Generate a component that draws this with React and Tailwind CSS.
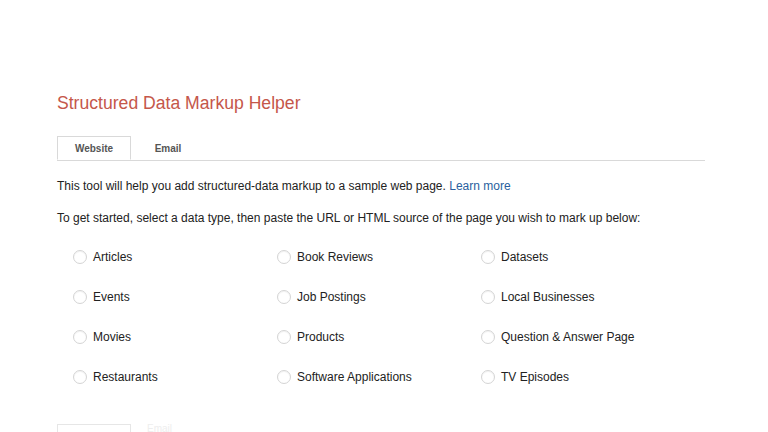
const TYPES = [
  ['Articles', 'Book Reviews', 'Datasets'],
  ['Events', 'Job Postings', 'Local Businesses'],
  ['Movies', 'Products', 'Question & Answer Page'],
  ['Restaurants', 'Software Applications', 'TV Episodes'],
]

function Radio({ label }) {
  return (
    <label className="flex items-center w-[204px] h-[40px]">
      <span className="ml-[16px] w-[14px] h-[14px] rounded-full border border-[#d4d4d4] bg-white shadow-[inset_0_1px_1px_rgba(0,0,0,0.06)]" />
      <span className="ml-[6px] text-[12px] text-[#222]">{label}</span>
    </label>
  )
}

export default function App() {
  return (
    <div className="w-[768px] h-[432px] overflow-hidden bg-white font-['Liberation_Sans',Arial,sans-serif]">
      <div className="pl-[57px] pt-[92px] w-[705px]">
        <h1 className="text-[17.6px] leading-[22px] text-[#c5574a]">Structured Data Markup Helper</h1>

        {/* Tabs */}
        <div className="mt-[22px] flex border-b border-[#d9d9d9]">
          <div className="w-[74px] h-[24px] -mb-px border border-b-white border-[#d9d9d9] bg-white flex items-center justify-center text-[10px] font-bold text-[#555]">
            Website
          </div>
          <div className="w-[74px] h-[24px] flex items-center justify-center text-[10px] font-bold text-[#555]">
            Email
          </div>
        </div>

        <p className="mt-[17px] text-[12px] leading-[16px] text-[#222]">
          This tool will help you add structured-data markup to a sample web page.{' '}
          <a className="text-[#2a5f9e]">Learn more</a>
        </p>
        <p className="mt-[16px] text-[12px] leading-[16px] text-[#222]">
          To get started, select a data type, then paste the URL or HTML source of the page you wish to mark up below:
        </p>

        <div className="mt-[11px] flex flex-col">
          {TYPES.map((row, i) => (
            <div key={i} className="flex">
              {row.map((t) => <Radio key={t} label={t} />)}
            </div>
          ))}
        </div>

        <div className="mt-[27px] flex items-start gap-[16px]">
          <div className="w-[74px] h-[24px] border border-[#e6e6e6]" />
          <div className="text-[10px] leading-[10px] text-[#eee]">Email</div>
        </div>
      </div>
    </div>
  )
}
